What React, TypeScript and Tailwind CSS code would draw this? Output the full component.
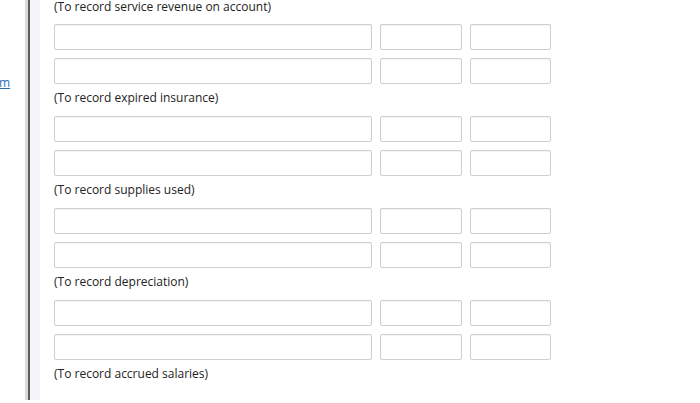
import React from "react";

const labels = [
  "(To record service revenue on account)",
  "(To record expired insurance)",
  "(To record supplies used)",
  "(To record depreciation)",
  "(To record accrued salaries)",
];

function Box({ w }: { w: string }) {
  return (
    <div
      className={`${w} h-full border border-[#cfcfcf] rounded-[2px] bg-white shadow-[inset_0_1px_1px_rgba(0,0,0,0.05)]`}
    />
  );
}

function Row() {
  return (
    <div className="flex gap-[8px] h-[26px]">
      <div className="w-[318px] h-full border border-[#cfcfcf] rounded-[2px] bg-white shadow-[inset_0_1px_1px_rgba(0,0,0,0.05)]" />
      <div className="w-[82px] h-full border border-[#cfcfcf] rounded-[2px] bg-white shadow-[inset_0_1px_1px_rgba(0,0,0,0.05)]" />
      <div className="w-[81px] h-full border border-[#cfcfcf] rounded-[2px] bg-white shadow-[inset_0_1px_1px_rgba(0,0,0,0.05)]" />
    </div>
  );
}

export default function App() {
  void Box;
  return (
    <div
      className="w-[700px] h-[403px] bg-white overflow-hidden flex"
      style={{ fontFamily: '"Open Sans", "Noto Sans", sans-serif' }}
    >
      <div className="w-[25px] h-[400px] relative overflow-hidden">
        <span className="absolute left-[-1px] top-[74px] text-[12px] leading-[18px] text-[#2a6db5] underline">
          m
        </span>
      </div>
      <div className="w-[3px] h-[400px] bg-[#d9d9d9]" />
      <div className="w-[2px] h-[400px] bg-[#5c5c5c]" />
      <div className="w-[10px] h-[400px] bg-[#f3f5fa]" />
      <div className="flex-1 h-[400px] pl-[14px] overflow-hidden">
        <div className="flex flex-col mt-[-2px] text-[12px] text-[#222]">
          {labels.map((l, i) => (
            <div key={i} className="flex flex-col">
              {i > 0 && (
                <>
                  <Row />
                  <div className="h-[8px]" />
                  <Row />
                  <div className="h-[5px]" />
                </>
              )}
              <div className="h-[18px] leading-[18px] whitespace-nowrap">{l}</div>
              <div className={i === 0 ? "h-[8px]" : "h-[9px]"} />
            </div>
          ))}
        </div>
      </div>
    </div>
  );
}
